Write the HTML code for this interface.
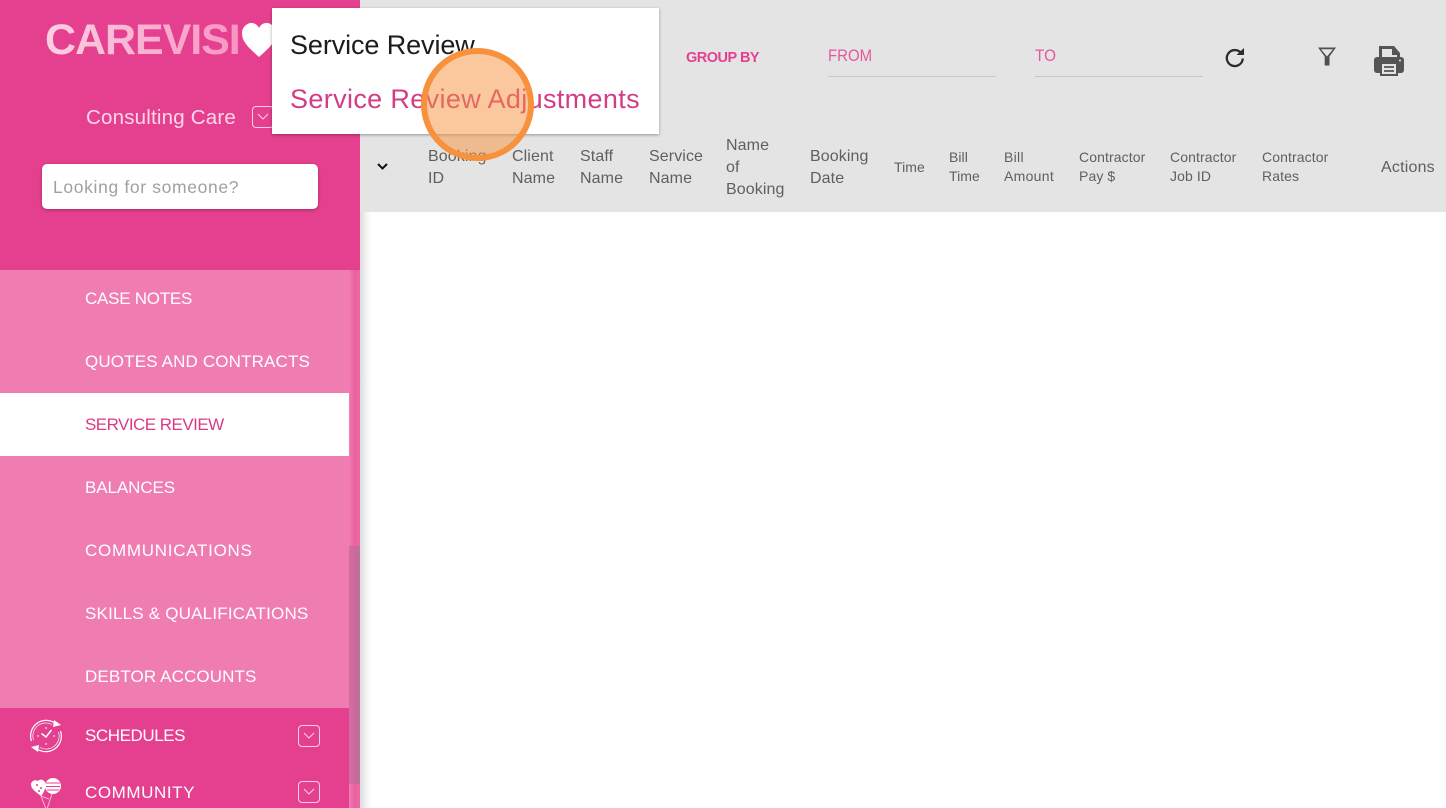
<!DOCTYPE html>
<html>
<head>
<meta charset="utf-8">
<style>
html,body{margin:0;padding:0;width:1446px;height:808px;overflow:hidden;background:#fff;font-family:"Liberation Sans",sans-serif}
.a{position:absolute;white-space:nowrap}
#side{position:absolute;left:0;top:0;width:360px;height:808px;background:#e5408f;overflow:hidden}
#shadow{position:absolute;left:360px;top:212px;width:12px;height:596px;background:linear-gradient(90deg,#dcdcdc,#f6f6f6 60%,#fff)}
#top{position:absolute;left:360px;top:0;width:1086px;height:212px;background:#e4e4e4}
.sub{position:absolute;left:0;width:349px;height:63px;background:#ef7db2;color:#fff;font-size:17px;line-height:63px;padding-left:85px;box-sizing:border-box}
.chk{position:absolute;box-sizing:border-box;width:22px;height:22px;border:1px solid #fbd0e4;border-radius:4px}
.chk svg{position:absolute;left:3px;top:4px}
.th{position:absolute;color:#5f5f5f;font-size:16px;line-height:22px;white-space:nowrap;letter-spacing:.1px}
.ts{position:absolute;color:#5f5f5f;font-size:14px;line-height:19px;white-space:nowrap;letter-spacing:.05px}
</style>
</head>
<body>
<div id="side">
  <div class="a" style="left:45px;top:15px;font-size:43px;line-height:50px;font-weight:bold;letter-spacing:-1.050px;background:linear-gradient(90deg,#fcd0e3,#f795c2);-webkit-background-clip:text;background-clip:text;color:transparent">CAREVISI</div>
  <svg class="a" style="left:241px;top:22px" width="36" height="36" viewBox="0 0 36 36"><path d="M18 35C8 26 1 20 1 11.500C1 5 6 1 10.500 1C14 1 16.500 3 18 6C19.500 3 22 1 25.500 1C30 1 35 5 35 11.500C35 20 28 26 18 35Z" fill="#fff"/></svg>
  <div class="a" style="left:86px;top:105px;font-size:20.500px;line-height:26px;color:#fdd7e8;letter-spacing:.2px">Consulting Care</div>
  <div class="chk" style="left:252px;top:106px"><svg width="14" height="12" viewBox="0 0 14 12"><path d="M2 3l5 5 5-5" fill="none" stroke="#fbd0e4" stroke-width="1"/></svg></div>
  <div class="a" style="left:42px;top:164px;width:276px;height:45px;background:#fff;border-radius:5px;box-shadow:0 1px 3px rgba(0,0,0,.3);color:#a0a0a0;font-size:17.500px;line-height:46px;padding-left:11px;box-sizing:border-box;letter-spacing:.65px">Looking for someone?</div>

  <div class="sub" style="top:267px;letter-spacing:-.25px">CASE NOTES</div>
  <div class="sub" style="top:330px;letter-spacing:.15px">QUOTES AND CONTRACTS</div>
  <div class="sub" style="top:393px;background:#fff;color:#d93a85;letter-spacing:-.53px">SERVICE REVIEW</div>
  <div class="sub" style="top:456px;letter-spacing:-.08px">BALANCES</div>
  <div class="sub" style="top:519px;letter-spacing:.73px">COMMUNICATIONS</div>
  <div class="sub" style="top:582px;letter-spacing:.2px">SKILLS &amp; QUALIFICATIONS</div>
  <div class="sub" style="top:645px;letter-spacing:.12px">DEBTOR ACCOUNTS</div>
  <div class="a" style="left:0;top:267px;width:360px;height:3px;background:#e5408f"></div>

  <svg class="a" style="left:28px;top:718px" width="36" height="36" viewBox="0 0 36 36" fill="none" stroke="#fff">
    <path d="M3.500 23A15.500 15.500 0 0 1 26 4.500" stroke-width="1.200"/><path d="M32.500 13A15.500 15.500 0 0 1 10 31.500" stroke-width="1.200"/>
    <path d="M5.500 22A13 13 0 0 1 24 6.500M30.500 14A13 13 0 0 1 12 29.500" stroke-width=".7"/>
    <path d="M26 2l7 5-8 2z" fill="#fff" stroke="none"/><path d="M10 34l-7-5 8-2z" fill="#fff" stroke="none"/>
    <path d="M18 9v2M18 25v2M9 18h2M25 18h2" stroke-width="1"/><path d="M13.500 15.500l4.500 3.500 5.500-7" stroke-width="1.500"/>
  </svg>
  <div class="a" style="left:85px;top:724px;font-size:17px;line-height:23px;color:#fff;letter-spacing:-.43px">SCHEDULES</div>
  <div class="chk" style="left:298px;top:725px"><svg width="14" height="12" viewBox="0 0 14 12"><path d="M2 3l5 5 5-5" fill="none" stroke="#fbd0e4" stroke-width="1"/></svg></div>

  <svg class="a" style="left:30px;top:777px" width="32" height="32" viewBox="0 0 32 32">
    <path d="M11 19C6 15 1 12 1 7.500C1 4 5 2 8 4C9.500 2 13 2 15 5C16 9 15 15 11 19Z" fill="#fff"/>
    <ellipse cx="23" cy="9" rx="8" ry="8" fill="#fff"/>
    <path d="M16 6h14M16 9.500h14M17 13h12" stroke="#e5408f" stroke-width="1"/>
    <circle cx="7" cy="8" r="1" fill="#e5408f"/><circle cx="11" cy="11" r="1" fill="#e5408f"/><circle cx="9" cy="14" r="1" fill="#e5408f"/>
    <path d="M11 19l5 13M22 17l-5 15M11 19l8 3" stroke="#fbd0e4" stroke-width=".8" fill="none"/>
  </svg>
  <div class="a" style="left:85px;top:781px;font-size:17px;line-height:23px;color:#fff;letter-spacing:.58px">COMMUNITY</div>
  <div class="chk" style="left:298px;top:781px"><svg width="14" height="12" viewBox="0 0 14 12"><path d="M2 3l5 5 5-5" fill="none" stroke="#fbd0e4" stroke-width="1"/></svg></div>

  <div class="a" style="left:349px;top:270px;width:11px;height:538px;background:linear-gradient(90deg,#f27db4,#e9609f 50%,#ec6aa6)"></div>
  <div class="a" style="left:349px;top:546px;width:11px;height:238px;background:linear-gradient(90deg,#d46da3,#c9699c 60%,#b9749c)"></div>
</div>

<div id="shadow"></div>
<div id="top"></div>

<div class="a" style="left:686px;top:49px;font-size:14.500px;line-height:18px;font-weight:bold;color:#e5408f;letter-spacing:-.5px">GROUP BY</div>
<div class="a" style="left:828px;top:46px;font-size:17px;line-height:20px;color:#e5579c;transform:scaleX(.88);transform-origin:0 0">FROM</div>
<div class="a" style="left:828px;top:76px;width:168px;height:1px;background:#c8c8c8"></div>
<div class="a" style="left:1035px;top:46px;font-size:17px;line-height:20px;color:#e5579c;transform:scaleX(.9);transform-origin:0 0">TO</div>
<div class="a" style="left:1035px;top:76px;width:168px;height:1px;background:#c8c8c8"></div>

<svg class="a" style="left:1224px;top:46px" width="22" height="22" viewBox="0 0 22 22"><path d="M17 7A8 8 0 1 0 18.800 12.500" fill="none" stroke="#2c2c2c" stroke-width="2.300"/><path d="M12.500 9L20 9L20 2Z" fill="#2c2c2c"/></svg>
<svg class="a" style="left:1317px;top:46px" width="20" height="21" viewBox="0 0 20 21"><path fill-rule="evenodd" d="M1 1.500H19L12.500 10.500V19.500H7.700V10.500ZM4 3.200H16L10 10.500Z" fill="#505050"/></svg>
<svg class="a" style="left:1373px;top:45px" width="32" height="32" viewBox="0 0 32 32">
  <path d="M6 1h15l6 7v5h-21z" fill="#555"/><path d="M9 4h10v6h5v3H9z" fill="#e4e4e4"/>
  <rect x="1" y="12" width="30" height="16" rx="3" fill="#555"/>
  <rect x="7" y="18" width="18" height="13" fill="#555"/><rect x="9" y="19" width="14" height="10" fill="#e4e4e4"/>
  <path d="M11 22h10M11 26h10" stroke="#555" stroke-width="1.800"/><circle cx="27" cy="15.500" r="1" fill="#e4e4e4"/>
</svg>

<svg class="a" style="left:376px;top:161px" width="13" height="11" viewBox="0 0 13 11"><path d="M2 3l4.500 4.500L11 3" fill="none" stroke="#111" stroke-width="2"/></svg>
<div class="th" style="left:428px;top:146px">Booking<br>ID</div>
<div class="th" style="left:512px;top:146px">Client<br>Name</div>
<div class="th" style="left:580px;top:146px">Staff<br>Name</div>
<div class="th" style="left:649px;top:146px">Service<br>Name</div>
<div class="th" style="left:726px;top:135px">Name<br>of<br>Booking</div>
<div class="th" style="left:810px;top:146px">Booking<br>Date</div>
<div class="ts" style="left:894px;top:158px">Time</div>
<div class="ts" style="left:949px;top:148px">Bill<br>Time</div>
<div class="ts" style="left:1004px;top:148px;letter-spacing:.3px">Bill<br>Amount</div>
<div class="ts" style="left:1079px;top:148px;letter-spacing:.1px">Contractor<br>Pay $</div>
<div class="ts" style="left:1170px;top:148px;letter-spacing:.1px">Contractor<br>Job ID</div>
<div class="ts" style="left:1262px;top:148px;letter-spacing:.1px">Contractor<br>Rates</div>
<div class="th" style="left:1381px;top:157px;letter-spacing:.2px">Actions</div>

<div class="a" style="left:272px;top:8px;width:387px;height:126px;background:#fff;box-shadow:0 1px 3px rgba(0,0,0,.35)"></div>
<div class="a" style="left:290px;top:28px;font-size:27px;line-height:34px;color:#1c1c1c;letter-spacing:-.1px">Service Review</div>
<div class="a" style="left:290px;top:82px;font-size:27px;line-height:34px;color:#d33c86;letter-spacing:.36px">Service Review Adjustments</div>

<div class="a" style="left:421px;top:48px;width:113px;height:113px;box-sizing:border-box;border-radius:50%;border:6px solid #f8913c;background:rgba(248,145,60,.5)"></div>
</body>
</html>
